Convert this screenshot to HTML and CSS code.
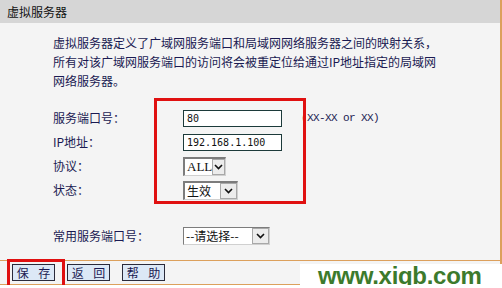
FILE: index.html
```html
<!DOCTYPE html>
<html lang="zh-CN">
<head>
  <meta charset="UTF-8">
  <meta name="viewport" content="width=device-width, initial-scale=1.0">
  <title>虚拟服务器</title>
  <link rel="stylesheet" href="styles.css">
</head>
<body>
  <div class="panel">
    <div class="title">虚拟服务器</div>
    <div class="main">
      <p class="intro">虚拟服务器定义了广域网服务端口和局域网网络服务器之间的映射关系，<br>所有对该广域网服务端口的访问将会被重定位给通过IP地址指定的局域网<br>网络服务器。</p>
      <form class="form" id="vs-form">
        <label class="label" for="port">服务端口号：</label>
        <div class="field"><input class="text" type="text" id="port" value="80"><span class="hint">(XX-XX or XX)</span></div>
        <label class="label" for="ip">IP地址：</label>
        <div class="field"><input class="text" type="text" id="ip" value="192.168.1.100"></div>
        <label class="label">协议：</label>
        <div class="field">
          <span class="select sel-proto"><span class="sel-text latin">ALL</span><span class="arrow"><svg width="9" height="6" viewBox="0 0 9 6"><polyline points="1,1 4.5,4.5 8,1" fill="none" stroke="#111" stroke-width="1.6"/></svg></span></span>
        </div>
        <label class="label">状态：</label>
        <div class="field">
          <span class="select sel-state"><span class="sel-text">生效</span><span class="arrow"><svg width="9" height="6" viewBox="0 0 9 6"><polyline points="1,1 4.5,4.5 8,1" fill="none" stroke="#111" stroke-width="1.6"/></svg></span></span>
        </div>
      </form>
      <div class="common">
        <span class="label">常用服务端口号：</span>
        <span class="select sel-common"><span class="sel-text">--请选择--</span><span class="arrow"><svg width="9" height="6" viewBox="0 0 9 6"><polyline points="1,1 4.5,4.5 8,1" fill="none" stroke="#111" stroke-width="1.6"/></svg></span></span>
      </div>
      <div class="mark mark-form"></div>
    </div>
    <div class="footer">
      <div class="mark mark-save"></div>
      <button class="btn" type="button">保 存</button>
      <button class="btn" type="button">返 回</button>
      <button class="btn" type="button">帮 助</button>
      <div class="watermark">www.xiqb.com</div>
    </div>
  </div>
</body>
</html>
```

FILE: styles.css
```css
body {
  margin: 0;
  padding: 0;
  background: #fff;
  font-family: "Noto Sans CJK SC", sans-serif;
  font-size: 12px;
  color: #1a1a52;
}
.panel {
  width: 500px;
  background: #f4f4f4;
  border-right: 2px solid #dca05c;
}
.title {
  height: 23px;
  line-height: 23px;
  padding-left: 7px;
  background: #d6d6d6;
  color: #111;
}
.main {
  position: relative;
  padding: 10px 0 12px 53px;
}
.intro {
  margin: 0;
  line-height: 19px;
}
.form {
  display: grid;
  grid-template-columns: 130px auto;
  grid-auto-rows: 24px;
  margin-top: 16px;
  align-items: center;
}
.label {
  line-height: 24px;
}
.field {
  display: flex;
  align-items: center;
}
.text {
  box-sizing: border-box;
  width: 99px;
  height: 17px;
  margin: 0;
  padding: 0 3px;
  border: 1px solid #1c3a3a;
  background: #fff;
  font-family: "DejaVu Sans Mono", monospace;
  font-size: 10px;
  color: #111;
  outline: none;
}
.hint {
  margin-left: 19px;
  font-family: "Liberation Mono", monospace;
  font-size: 11px;
  letter-spacing: -0.6px;
  color: #1a1a52;
}
.select {
  display: inline-flex;
  align-items: center;
  box-sizing: border-box;
  height: 19px;
  border-top: 2px solid #7c7c7c;
  border-left: 2px solid #7c7c7c;
  border-right: 1px solid #d0d0d0;
  border-bottom: 1px solid #d0d0d0;
  background: #fff;
  color: #111;
}
.sel-text {
  flex: 1;
  padding-left: 2px;
  line-height: 16px;
}
.latin {
  font-family: "Liberation Serif", serif;
  font-size: 13px;
}
.arrow {
  display: flex;
  align-items: center;
  justify-content: center;
  box-sizing: border-box;
  width: 17px;
  height: 16px;
  border: 1px solid #a8a8a8;
  background: #ececec;
}
.sel-proto {
  width: 43px;
}
.sel-state {
  width: 55px;
}
.sel-common {
  width: 87px;
  height: 18px;
  border-top-width: 1px;
  border-left-width: 1px;
}
.common {
  display: grid;
  grid-template-columns: 130px auto;
  align-items: center;
  height: 24px;
  margin-top: 22px;
}
.mark {
  position: absolute;
  box-sizing: border-box;
  border: 3px solid #e01010;
  pointer-events: none;
}
.mark-form {
  left: 154px;
  top: 75px;
  width: 152px;
  height: 106px;
}
.footer {
  position: relative;
  display: flex;
  gap: 12px;
  height: 25px;
  padding: 3px 0 0 12px;
  box-sizing: border-box;
  border-top: 1px solid #dca05c;
  border-bottom: 1px solid #dca05c;
}
.btn {
  box-sizing: border-box;
  width: 43px;
  height: 17px;
  margin: 0;
  padding: 0;
  border: 1px solid #2a2a3a;
  background: #dce8f6;
  font-family: "Noto Sans CJK SC", sans-serif;
  font-size: 12px;
  line-height: 15px;
  word-spacing: 7px;
  color: #1a1a52;
}
.mark-save {
  left: 7px;
  top: -2px;
  width: 58px;
  height: 32px;
}
.watermark {
  position: absolute;
  left: 300px;
  top: 3px;
  width: 202px;
  height: 26px;
  padding-left: 18px;
  box-sizing: border-box;
  background: #fff;
  font-family: "Liberation Sans", sans-serif;
  font-weight: bold;
  font-size: 24px;
  line-height: 24px;
  letter-spacing: -0.3px;
  color: #3c7a2c;
}
```
